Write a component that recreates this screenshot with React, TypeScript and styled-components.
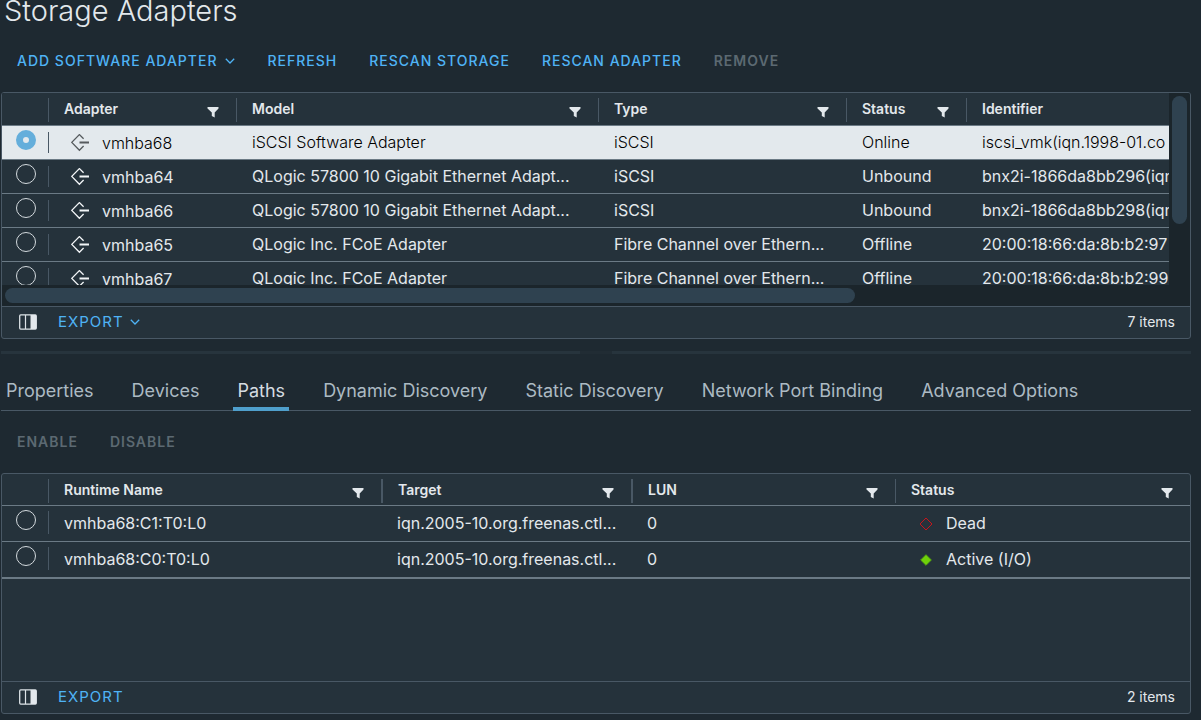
import React from "react";
import styled, { createGlobalStyle, css } from "styled-components";

const GlobalStyle = createGlobalStyle`
  * { box-sizing: border-box; }
  body {
    margin: 0;
    background: #1e2931;
    color: #e3e8ec;
    font-family: Inter, "Open Sans", sans-serif;
    font-size: 16px;
    line-height: 20px;
  }
  button, input { font: inherit; color: inherit; }
`;

const Page = styled.main`
  display: flex;
  flex-direction: column;
  min-height: 100vh;
  padding: 0 10px 6px 1px;
`;

const Title = styled.h1`
  margin: 0 0 22px 3px;
  font-size: 29px;
  font-weight: 300;
  line-height: 22px;
`;

const Toolbar = styled.div<{ $spaced?: boolean }>`
  display: flex;
  height: 34px;
  align-items: center;
  margin: ${(p) => (p.$spaced ? "14px" : "0")} 0 14px;
`;

const ActionButton = styled.button<{ $light?: boolean }>`
  display: inline-flex;
  align-items: center;
  gap: ${(p) => (p.$light ? 6 : 8)}px;
  height: 30px;
  padding: 0 16px;
  border: 0;
  background: none;
  color: #4fb3f5;
  font-size: ${(p) => (p.$light ? 15 : 14)}px;
  font-weight: ${(p) => (p.$light ? 400 : 500)};
  letter-spacing: 1px;
  white-space: nowrap;
  cursor: pointer;
  &:disabled { color: #5c6972; font-weight: 600; cursor: default; }
`;

const Panel = styled.section<{ $fill?: boolean }>`
  display: flex;
  flex-direction: column;
  border: 1px solid #495865;
  border-radius: 3px;
  background: #25323b;
  overflow: hidden;
  ${(p) => p.$fill && css`flex: 1;`}
`;

const ScrollArea = styled.div`
  display: grid;
  grid-template-columns: minmax(0, 1fr) 21px;
  grid-template-rows: 192px 21px;
  background: #1b252b;
`;

const Viewport = styled.div`
  overflow: hidden;
  background: #25323b;
`;

const Track = styled.div<{ $vertical?: boolean }>`
  padding: ${(p) => (p.$vertical ? "3px 3px 0" : "3px 0 3px 3px")};
`;

const Thumb = styled.div<{ $vertical?: boolean }>`
  width: ${(p) => (p.$vertical ? "100%" : "73%")};
  height: ${(p) => (p.$vertical ? "128px" : "100%")};
  border-radius: 8px;
  background: #2f4250;
`;

const Table = styled.table<{ $wide?: boolean }>`
  width: ${(p) => (p.$wide ? "1598px" : "100%")};
  table-layout: fixed;
  border-collapse: separate;
  border-spacing: 0;
`;

const HeadCell = styled.th<{ $height: number }>`
  height: ${(p) => p.$height}px;
  padding: 5px 0 0;
  border-bottom: 1px solid #6b7a85;
  vertical-align: top;
  text-align: left;
`;

const HeadInner = styled.div<{ $thick?: boolean }>`
  display: flex;
  justify-content: space-between;
  height: 24px;
  padding: 0 17px 0 15px;
  border-left: ${(p) => (p.$thick ? 2 : 1)}px solid #495865;
  font-size: 14px;
  font-weight: 600;
  line-height: 22px;
`;

const FilterButton = styled.button`
  display: flex;
  align-items: flex-end;
  height: 20px;
  padding: 0;
  border: 0;
  background: none;
`;

const Row = styled.tr<{ $height: number; $selected?: boolean }>`
  height: ${(p) => p.$height}px;
  ${(p) => p.$selected && css`background: #e3e9ed; color: #000; font-weight: 300;`}
`;

const Cell = styled.td<{ $last?: boolean }>`
  padding: 0 16px 2px 16px;
  border-bottom: ${(p) => (p.$last ? 2 : 1)}px solid #6b7a85;
  overflow: hidden;
  white-space: nowrap;
`;

const SelectCell = styled(Cell)`
  padding: 4px 0 0 14px;
  vertical-align: top;
`;

const DividedCell = styled(Cell)<{ $path?: boolean }>`
  padding: 0 0 ${(p) => (p.$path ? 2 : 0)}px;
`;

const Divided = styled.div<{ $path?: boolean }>`
  display: flex;
  align-items: center;
  gap: 13px;
  height: ${(p) => (p.$path ? 23 : 21)}px;
  padding-left: ${(p) => (p.$path ? 15 : 22)}px;
  border-left: 1px solid #495865;
`;

const AdapterName = styled.span`
  padding-top: 1px;
`;

const Radio = styled.input`
  appearance: none;
  display: block;
  width: 20px;
  height: 20px;
  margin: 0;
  border: 1px solid #d4dade;
  border-radius: 50%;
  &:checked {
    border: 7px solid #64aedb;
    background: #e3e9ed;
  }
`;

const Footer = styled.footer`
  display: flex;
  align-items: center;
  height: 32px;
  margin-top: auto;
  padding: 0 15px 2px 17px;
  border-top: 1px solid #495865;
`;

const ColumnsButton = styled.button`
  display: flex;
  padding: 0;
  margin-right: 5px;
  border: 0;
  background: none;
`;

const Count = styled.span`
  margin-left: auto;
  font-size: 14px;
`;

const Splitter = styled.div`
  display: flex;
  gap: 32px;
  height: 3px;
  margin: 12px 0 16px;
  background: #212c34;
`;

const SplitterBar = styled.span`
  flex: 1;
  background: #27343d;
`;

const Tabs = styled.div`
  display: flex;
  gap: 30px;
  height: 41px;
  padding-left: 1px;
  border-bottom: 1px solid #495865;
`;

const Tab = styled.button<{ $active?: boolean }>`
  height: 41px;
  padding: 0 4px;
  border: 0;
  background: none;
  color: ${(p) => (p.$active ? "#d5dce1" : "#acbac3")};
  font-size: 18px;
  white-space: nowrap;
  box-shadow: ${(p) => (p.$active ? "inset 0 -4px #4f9fcc" : "none")};
`;

const StatusInner = styled.span`
  display: flex;
  align-items: center;
  gap: 13px;
  padding-left: 8px;
`;

const FilterIcon = () => (
  <svg width="12" height="11" viewBox="0 0 12 11" fill="#e3e8ec" aria-hidden="true">
    <path d="M.5 0h11v1.4L7.7 5.6V10.5L4.8 9V5.6L.5 1.4z" />
  </svg>
);

const Caret = () => (
  <svg width="10" height="6" viewBox="0 0 10 6" fill="none" stroke="currentColor" strokeWidth="1.3" aria-hidden="true">
    <path d="M.8.8 5 5 9.2.8" />
  </svg>
);

const AdapterIcon = ({ muted }: { muted: boolean }) => (
  <svg width="18" height="18" viewBox="0 0 18 18" fill="none" stroke={muted ? "#565b5e" : "#f2f5f7"} aria-hidden="true">
    <path d="M12.6 4.8 8.4.6.8 8.4l7.6 7.8 4.2-4.2" strokeWidth="1.3" />
    <path d="M8.5 8.5H18" strokeWidth="2" />
  </svg>
);

const ColumnsIcon = () => (
  <svg width="18" height="16" viewBox="0 0 18 16" aria-hidden="true">
    <rect x=".7" y=".9" width="16.6" height="14.2" rx="1" fill="none" stroke="#dde3e7" strokeWidth="1.3" />
    <path d="M6.5 1v14" stroke="#dde3e7" strokeWidth="1.2" />
    <path d="M11.5 1H17v14h-5.5z" fill="#e3e8ec" />
  </svg>
);

const StatusIcon = ({ active }: { active: boolean }) => (
  <svg width="14" height="16" viewBox="0 0 14 16" aria-hidden="true">
    <path
      d={active ? "M7 3.7 12.3 9 7 14.3 1.7 9z" : "M7 3 13 9 7 15 1 9z"}
      fill={active ? "#6fd00a" : "none"}
      stroke={active ? "#55a80f" : "#c8141b"}
      strokeWidth="1"
    />
  </svg>
);

type Column = { label: string; width?: number; filter?: boolean; thick?: boolean };

const adapterColumns: Column[] = [
  { label: "Adapter", width: 188, filter: true },
  { label: "Model", width: 362, filter: true },
  { label: "Type", width: 248, filter: true },
  { label: "Status", width: 120, filter: true },
  { label: "Identifier" },
];

const pathColumns: Column[] = [
  { label: "Runtime Name", width: 333, filter: true },
  { label: "Target", width: 250, filter: true, thick: true },
  { label: "LUN", width: 264, filter: true, thick: true },
  { label: "Status", filter: true },
];

const adapters = [
  ["vmhba68", "iSCSI Software Adapter", "iSCSI", "Online", "iscsi_vmk(iqn.1998-01.co"],
  ["vmhba64", "QLogic 57800 10 Gigabit Ethernet Adapt...", "iSCSI", "Unbound", "bnx2i-1866da8bb296(iqn"],
  ["vmhba66", "QLogic 57800 10 Gigabit Ethernet Adapt...", "iSCSI", "Unbound", "bnx2i-1866da8bb298(iqn"],
  ["vmhba65", "QLogic Inc. FCoE Adapter", "Fibre Channel over Ethern...", "Offline", "20:00:18:66:da:8b:b2:97"],
  ["vmhba67", "QLogic Inc. FCoE Adapter", "Fibre Channel over Ethern...", "Offline", "20:00:18:66:da:8b:b2:99"],
];

const paths = [
  { name: "vmhba68:C1:T0:L0", target: "iqn.2005-10.org.freenas.ctl...", lun: "0", status: "Dead" },
  { name: "vmhba68:C0:T0:L0", target: "iqn.2005-10.org.freenas.ctl...", lun: "0", status: "Active (I/O)" },
];

const tabs = ["Properties", "Devices", "Paths", "Dynamic Discovery", "Static Discovery", "Network Port Binding", "Advanced Options"];

const TableHead = ({ columns, height }: { columns: Column[]; height: number }) => (
  <>
    <colgroup>
      <col width={46} />
      {columns.map((c) => <col key={c.label} width={c.width} />)}
    </colgroup>
    <thead>
      <tr>
        <HeadCell as="td" $height={height} />
        {columns.map((c) => (
          <HeadCell key={c.label} scope="col" $height={height}>
            <HeadInner $thick={c.thick}>
              {c.label}
              {c.filter && <FilterButton aria-label={`Filter ${c.label}`}><FilterIcon /></FilterButton>}
            </HeadInner>
          </HeadCell>
        ))}
      </tr>
    </thead>
  </>
);

export default function App() {
  return (
    <Page>
      <GlobalStyle />
      <Title>Storage Adapters</Title>
      <Toolbar>
        <ActionButton>ADD SOFTWARE ADAPTER<Caret /></ActionButton>
        <ActionButton>REFRESH</ActionButton>
        <ActionButton>RESCAN STORAGE</ActionButton>
        <ActionButton>RESCAN ADAPTER</ActionButton>
        <ActionButton disabled>REMOVE</ActionButton>
      </Toolbar>
      <Panel>
        <ScrollArea>
          <Viewport>
            <Table $wide>
              <TableHead columns={adapterColumns} height={33} />
              <tbody>
                {adapters.map(([name, ...rest], i) => (
                  <Row key={name} $height={34} $selected={i === 0}>
                    <SelectCell><Radio type="radio" name="adapter" aria-label={name} defaultChecked={i === 0} /></SelectCell>
                    <DividedCell>
                      <Divided>
                        <AdapterIcon muted={i === 0} />
                        <AdapterName>{name}</AdapterName>
                      </Divided>
                    </DividedCell>
                    {rest.map((value) => <Cell key={value}>{value}</Cell>)}
                  </Row>
                ))}
              </tbody>
            </Table>
          </Viewport>
          <Track $vertical><Thumb $vertical /></Track>
          <Track><Thumb /></Track>
        </ScrollArea>
        <Footer>
          <ColumnsButton aria-label="Show columns"><ColumnsIcon /></ColumnsButton>
          <ActionButton $light>EXPORT<Caret /></ActionButton>
          <Count>7 items</Count>
        </Footer>
      </Panel>
      <Splitter><SplitterBar /><SplitterBar /></Splitter>
      <Tabs role="tablist">
        {tabs.map((t) => (
          <Tab key={t} role="tab" aria-selected={t === "Paths"} $active={t === "Paths"}>{t}</Tab>
        ))}
      </Tabs>
      <Toolbar $spaced>
        <ActionButton disabled>ENABLE</ActionButton>
        <ActionButton disabled>DISABLE</ActionButton>
      </Toolbar>
      <Panel $fill>
        <Table>
          <TableHead columns={pathColumns} height={32} />
          <tbody>
            {paths.map((p, i) => {
              const last = i === paths.length - 1;
              return (
                <Row key={p.name} $height={last ? 37 : 36}>
                  <SelectCell $last={last}><Radio type="radio" name="path" aria-label={p.name} /></SelectCell>
                  <DividedCell $path $last={last}><Divided $path>{p.name}</Divided></DividedCell>
                  <Cell $last={last}>{p.target}</Cell>
                  <Cell $last={last}>{p.lun}</Cell>
                  <Cell $last={last}>
                    <StatusInner><StatusIcon active={p.status !== "Dead"} />{p.status}</StatusInner>
                  </Cell>
                </Row>
              );
            })}
          </tbody>
        </Table>
        <Footer>
          <ColumnsButton aria-label="Show columns"><ColumnsIcon /></ColumnsButton>
          <ActionButton $light>EXPORT</ActionButton>
          <Count>2 items</Count>
        </Footer>
      </Panel>
    </Page>
  );
}
